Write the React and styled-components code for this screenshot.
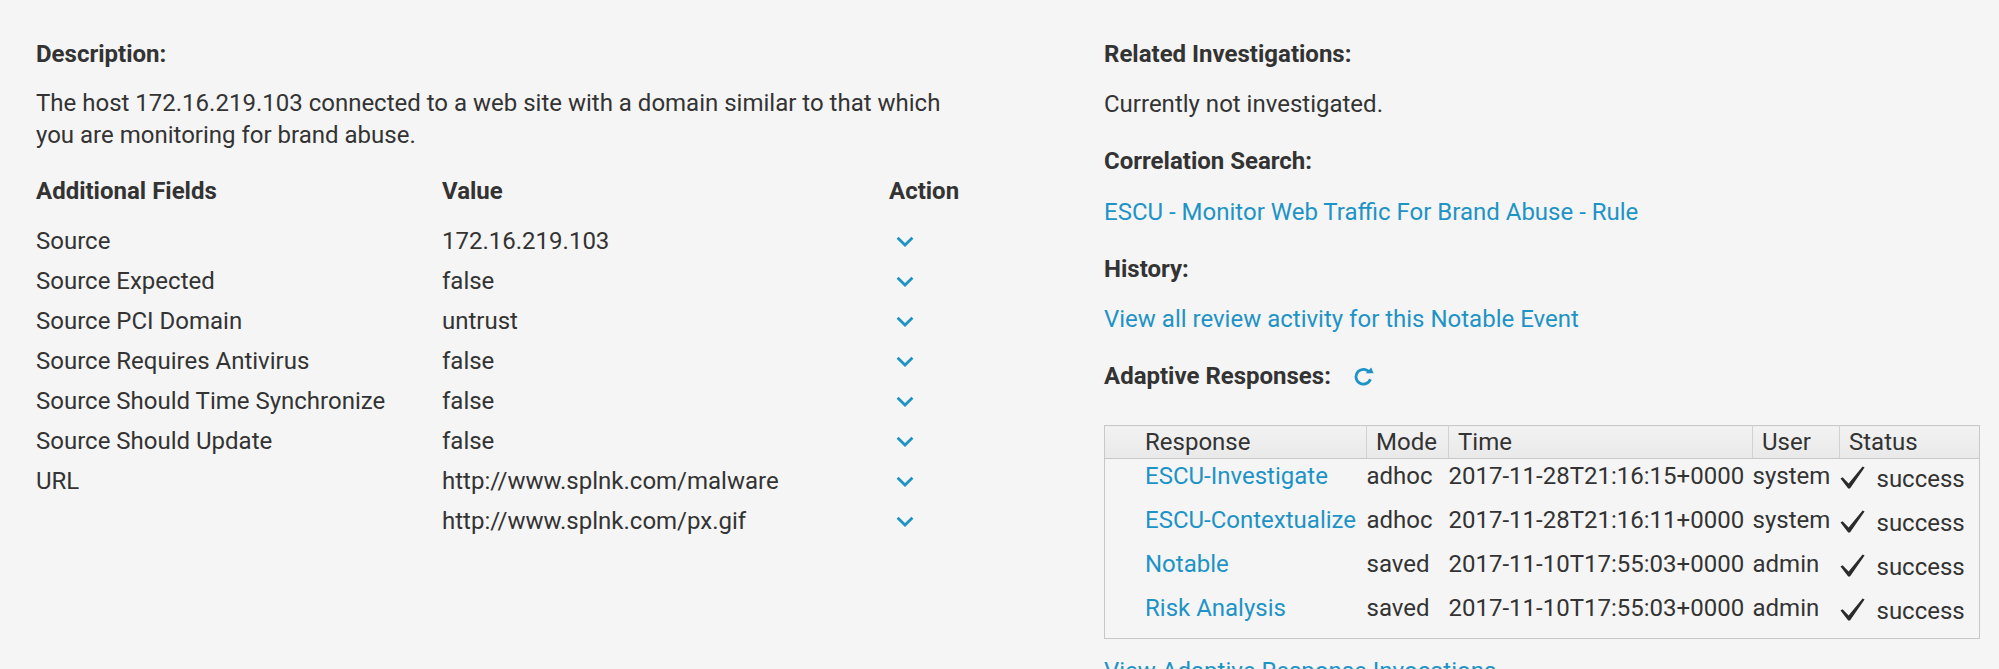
import styled, { createGlobalStyle } from 'styled-components'

const GlobalStyle = createGlobalStyle`
  body {
    margin: 0;
    background: #f5f5f5;
    font-family: Roboto, "Liberation Sans", sans-serif;
    font-size: 24px;
    color: #333;
  }
`

const Page = styled.div`
  display: flex;
  height: 669px;
  overflow: hidden;
  box-sizing: border-box;
  padding: 38px 19px 0 36px;
`
const LeftColumn = styled.div`
  flex: none;
  width: 1068px;
`
const RightColumn = styled.div`
  flex: 1;
  min-width: 0;
`
const Heading = styled.h3`
  display: flex;
  align-items: center;
  gap: 22px;
  margin: 0 0 ${(p) => p.gap ?? 18}px;
  font-size: 24px;
  font-weight: 700;
  line-height: 32px;
  color: #333;
`
const Text = styled.p`
  margin: 0 0 ${(p) => p.gap ?? 25}px;
  line-height: 32px;
`
const Link = styled.a`
  color: #1e93c6;
  text-decoration: none;
  cursor: pointer;
`
const LinkLine = styled(Text)``

const Fields = styled.div`
  display: grid;
  grid-template-columns: 406px 447px 1fr;
  grid-template-rows: 50px;
  grid-auto-rows: 40px;
  align-items: center;
  margin-top: 20px;
`
const FieldHead = styled.div`
  align-self: start;
  font-weight: 700;
  line-height: 40px;
`
const Cell = styled.div`
  white-space: nowrap;
`
const ActionCell = styled.div`
  padding-left: 7px;
  display: flex;
  align-items: center;
`

const Table = styled.table`
  width: 100%;
  margin: 33px 0 16px;
  border: 1px solid #c8c8c8;
  border-collapse: collapse;
  table-layout: fixed;
`
const Th = styled.th`
  text-align: left;
  font-weight: 400;
  line-height: 32px;
  padding: 0 0 0 ${(p) => p.pad || 9}px;
  border-left: ${(p) => (p.first ? 'none' : '1px solid #d2d2d2')};
  border-bottom: 1px solid #c8c8c8;
  background: linear-gradient(#f2f2f2, #e9e9e9);
  white-space: nowrap;
`
const Td = styled.td`
  vertical-align: top;
  line-height: 34px;
  height: 34px;
  padding: 0 0 ${(p) => (p.last ? 13 : 10)}px ${(p) => p.pad || 0}px;
  white-space: nowrap;
`
const StatusBox = styled.div`
  display: flex;
  align-items: flex-start;
  gap: 12px;
  height: 34px;
`
const CheckIcon = styled.svg`
  flex: none;
  margin-top: 7px;
`
const StatusText = styled.span`
  padding-top: 6px;
  line-height: 28px;
`

const Chevron = () => (
  <svg width="18" height="11" viewBox="0 0 18 11">
    <polyline
      points="1.6,1.8 9,9 16.4,1.8"
      fill="none"
      stroke="#1e93c6"
      strokeWidth="2.8"
    />
  </svg>
)

const Check = () => (
  <CheckIcon width="25" height="23" viewBox="0 0 25 23">
    <polygon
      points="0.5,12.6 2.6,11.2 8.6,17.6 22.6,0.6 24.6,1.6 10,22.4 8.2,22.4"
      fill="#2b2b2b"
    />
  </CheckIcon>
)

const Refresh = () => (
  <svg width="22" height="19" viewBox="0 0 22 19">
    <path
      d="M16.6 5.6 A7.4 7.4 0 1 0 17.4 12.2"
      fill="none"
      stroke="#1e93c6"
      strokeWidth="2.8"
    />
    <polygon points="12.8,6.2 20.6,6.2 18.2,0.6" fill="#1e93c6" />
  </svg>
)

const fields = [
  ['Source', '172.16.219.103'],
  ['Source Expected', 'false'],
  ['Source PCI Domain', 'untrust'],
  ['Source Requires Antivirus', 'false'],
  ['Source Should Time Synchronize', 'false'],
  ['Source Should Update', 'false'],
  ['URL', 'http://www.splnk.com/malware'],
  ['', 'http://www.splnk.com/px.gif'],
]

const responses = [
  ['ESCU-Investigate', 'adhoc', '2017-11-28T21:16:15+0000', 'system'],
  ['ESCU-Contextualize', 'adhoc', '2017-11-28T21:16:11+0000', 'system'],
  ['Notable', 'saved', '2017-11-10T17:55:03+0000', 'admin'],
  ['Risk Analysis', 'saved', '2017-11-10T17:55:03+0000', 'admin'],
]

const App = () => {
  return (
    <>
      <GlobalStyle />
      <Page>
        <LeftColumn>
          <Heading gap={17}>Description:</Heading>
          <Text gap={0}>
            The host 172.16.219.103 connected to a web site with a domain similar to that which
            <br />
            you are monitoring for brand abuse.
          </Text>
          <Fields>
            <FieldHead>Additional Fields</FieldHead>
            <FieldHead>Value</FieldHead>
            <FieldHead>Action</FieldHead>
            {fields.map(([name, value], i) => (
              <>
                <Cell key={'n' + i}>{name}</Cell>
                <Cell key={'v' + i}>{value}</Cell>
                <ActionCell key={'a' + i}>
                  <Chevron />
                </ActionCell>
              </>
            ))}
          </Fields>
        </LeftColumn>

        <RightColumn>
          <Heading>Related Investigations:</Heading>
          <Text>Currently not investigated.</Text>
          <Heading gap={19}>Correlation Search:</Heading>
          <LinkLine>
            <Link>ESCU - Monitor Web Traffic For Brand Abuse - Rule</Link>
          </LinkLine>
          <Heading>History:</Heading>
          <LinkLine>
            <Link>View all review activity for this Notable Event</Link>
          </LinkLine>
          <Heading gap={0}>
            Adaptive Responses:
            <Refresh />
          </Heading>
          <Table>
            <colgroup>
              <col style={{ width: 262 }} />
              <col style={{ width: 82 }} />
              <col style={{ width: 304 }} />
              <col style={{ width: 87 }} />
              <col />
            </colgroup>
            <thead>
              <tr>
                <Th first pad={40}>Response</Th>
                <Th>Mode</Th>
                <Th>Time</Th>
                <Th>User</Th>
                <Th>Status</Th>
              </tr>
            </thead>
            <tbody>
              {responses.map(([name, mode, time, user], i) => {
                const last = i === responses.length - 1
                return (
                  <tr key={name}>
                    <Td pad={40} last={last}>
                      <Link>{name}</Link>
                    </Td>
                    <Td last={last}>{mode}</Td>
                    <Td last={last}>{time}</Td>
                    <Td last={last}>{user}</Td>
                    <Td last={last}>
                      <StatusBox>
                        <Check />
                        <StatusText>success</StatusText>
                      </StatusBox>
                    </Td>
                  </tr>
                )
              })}
            </tbody>
          </Table>
          <LinkLine>
            <Link>View Adaptive Response Invocations</Link>
          </LinkLine>
        </RightColumn>
      </Page>
    </>
  )
}

export default App
